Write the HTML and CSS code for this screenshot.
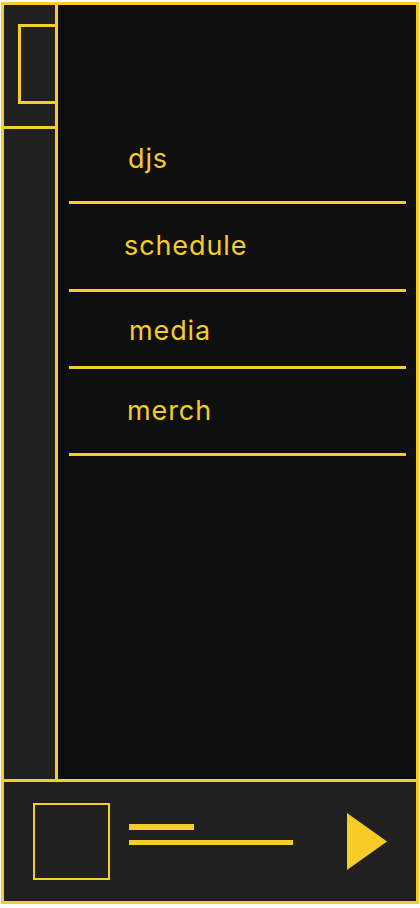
FILE: index.html
```html
<!DOCTYPE html>
<html lang="en">
<head>
<meta charset="utf-8">
<title>Radio</title>
<link rel="stylesheet" href="styles.css">
</head>
<body>
<div class="frame">
  <div class="top">
    <aside class="sidebar">
      <div class="sidebar-head">
        <div class="logo-box"></div>
      </div>
    </aside>
    <main class="main">
      <nav class="menu">
        <a class="menu-item item-djs" href="#">djs</a>
        <a class="menu-item item-schedule" href="#">schedule</a>
        <a class="menu-item item-media" href="#">media</a>
        <a class="menu-item item-merch" href="#">merch</a>
      </nav>
    </main>
  </div>
  <footer class="player">
    <div class="cover"></div>
    <div class="track">
      <span class="track-title"></span>
      <span class="track-progress"></span>
    </div>
    <svg class="play" width="40" height="57" viewBox="0 0 40 57" aria-label="play">
      <polygon points="0,0 40,28.5 0,57" fill="#f5cd26"/>
    </svg>
  </footer>
</div>
</body>
</html>
```

FILE: styles.css
```css
* { box-sizing: border-box; }

html, body {
  margin: 0;
  padding: 0;
  background: #ffffff;
}

body {
  font-family: Inter, "Noto Sans", sans-serif;
  padding: 2px 1px 0 1px;
}

.frame {
  width: 418px;
  height: 902px;
  border: 3px solid #f5cd26;
  background: #0f0f0f;
  display: flex;
  flex-direction: column;
}

.top {
  flex: 1;
  display: flex;
  min-height: 0;
}

.sidebar {
  width: 54px;
  background: #202020;
  border-right: 3px solid #f5cd26;
  overflow: hidden;
  flex: none;
}

.sidebar-head {
  height: 124px;
  border-bottom: 3px solid #f5cd26;
  padding: 19px 0 0 14px;
}

.logo-box {
  width: 80px;
  height: 80px;
  border: 3px solid #f5cd26;
}

.main {
  flex: 1;
  padding: 0 10px 0 11px;
}

.menu {
  display: flex;
  flex-direction: column;
  margin-top: 112px;
}

.menu-item {
  display: block;
  color: #f5cd26;
  text-decoration: none;
  font-size: 27px;
  letter-spacing: 0.9px;
  line-height: 32px;
  padding: 26px 0 26px 55px;
  border-bottom: 3px solid #f5cd26;
}

.item-djs { padding-left: 59px; }
.item-schedule { padding-bottom: 27px; }
.item-media { padding-top: 23px; padding-bottom: 19px; padding-left: 60px; }
.item-merch { padding-left: 58px; }

.player {
  flex: none;
  height: 122px;
  border-top: 3px solid #f5cd26;
  background: #202020;
  display: flex;
  align-items: center;
  padding: 0 29px;
}

.cover {
  width: 77px;
  height: 77px;
  border: 2px solid #f5cd26;
  flex: none;
}

.track {
  display: flex;
  flex-direction: column;
  gap: 10px;
  margin-left: 19px;
  margin-bottom: 14px;
}

.track-title {
  display: block;
  width: 65px;
  height: 6px;
  background: #f5cd26;
}

.track-progress {
  display: block;
  width: 164px;
  height: 5px;
  background: #f5cd26;
}

.play {
  margin-left: auto;
  display: block;
}
```
